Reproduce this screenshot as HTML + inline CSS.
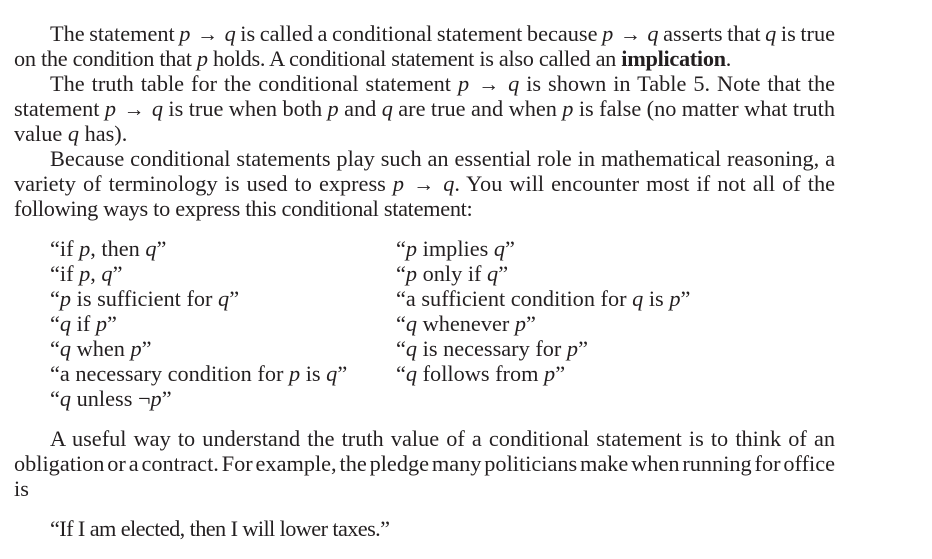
<!DOCTYPE html>
<html><head><meta charset="utf-8"><style>
body{margin:0;background:#fff;width:932px;height:559px;overflow:hidden;position:relative;font-family:"Liberation Serif","Times New Roman","DejaVu Serif",serif;font-size:22.3px;color:#231f20}
.l{position:absolute;line-height:25px;white-space:nowrap}
.j{left:14px;width:821px;text-align:justify;text-align-last:justify;word-spacing:-4px}
.ji{left:50px;width:785px;text-align:justify;text-align-last:justify;word-spacing:-4px}
.n{letter-spacing:-0.3px}
i{font-style:italic}
.a{padding:0 2px;font-size:21px}
</style></head><body>
<div class="l ji" style="top:21px">The statement <i>p</i> <span class="a">→</span> <i>q</i> is called a conditional statement because <i>p</i> <span class="a">→</span> <i>q</i> asserts that <i>q</i> is true</div>
<div class="l n" style="top:46px;left:14px">on the condition that <i>p</i> holds. A conditional statement is also called an <b>implication</b>.</div>
<div class="l ji" style="top:71px">The truth table for the conditional statement <i>p</i> <span class="a">→</span> <i>q</i> is shown in Table 5. Note that the</div>
<div class="l j" style="top:96px">statement <i>p</i> <span class="a">→</span> <i>q</i> is true when both <i>p</i> and <i>q</i> are true and when <i>p</i> is false (no matter what truth</div>
<div class="l" style="top:121px;left:14px">value <i>q</i> has).</div>
<div class="l ji" style="top:146px">Because conditional statements play such an essential role in mathematical reasoning, a</div>
<div class="l j" style="top:171px">variety of terminology is used to express <i>p</i> <span class="a">→</span> <i>q</i>. You will encounter most if not all of the</div>
<div class="l n" style="top:196px;left:14px">following ways to express this conditional statement:</div>

<div class="l" style="top:236px;left:50px">“if <i>p</i>, then <i>q</i>”</div>
<div class="l" style="top:261px;left:50px">“if <i>p</i>, <i>q</i>”</div>
<div class="l" style="top:286px;left:50px">“<i>p</i> is sufficient for <i>q</i>”</div>
<div class="l" style="top:311px;left:50px">“<i>q</i> if <i>p</i>”</div>
<div class="l" style="top:336px;left:50px">“<i>q</i> when <i>p</i>”</div>
<div class="l" style="top:361px;left:50px">“a necessary condition for <i>p</i> is <i>q</i>”</div>
<div class="l" style="top:386px;left:50px">“<i>q</i> unless ¬<i>p</i>”</div>

<div class="l" style="top:236px;left:396px">“<i>p</i> implies <i>q</i>”</div>
<div class="l" style="top:261px;left:396px">“<i>p</i> only if <i>q</i>”</div>
<div class="l" style="top:286px;left:396px">“a sufficient condition for <i>q</i> is <i>p</i>”</div>
<div class="l" style="top:311px;left:396px">“<i>q</i> whenever <i>p</i>”</div>
<div class="l" style="top:336px;left:396px">“<i>q</i> is necessary for <i>p</i>”</div>
<div class="l" style="top:361px;left:396px">“<i>q</i> follows from <i>p</i>”</div>

<div class="l ji" style="top:426px">A useful way to understand the truth value of a conditional statement is to think of an</div>
<div class="l j" style="top:451px">obligation or a contract. For example, the pledge many politicians make when running for office</div>
<div class="l" style="top:476px;left:14px">is</div>
<div class="l" style="top:516px;left:50px;letter-spacing:-0.6px">“If I am elected, then I will lower taxes.”</div>
</body></html>
